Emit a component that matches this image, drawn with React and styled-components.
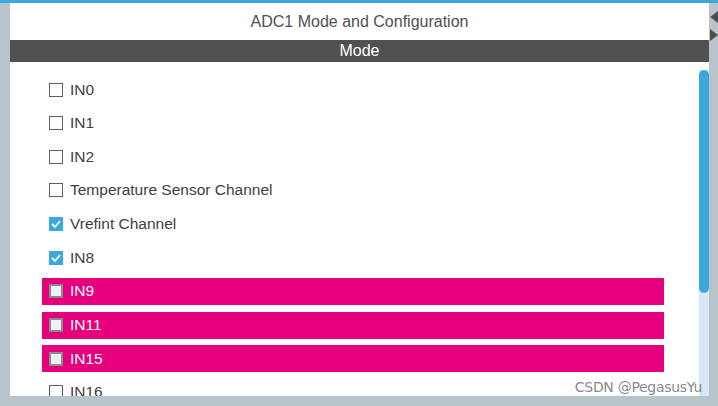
import React from "react";
import styled, { createGlobalStyle } from "styled-components";

const GlobalStyle = createGlobalStyle`
  html, body {
    margin: 0;
    padding: 0;
    background: #b9c4ca;
    font-family: Arial, "Liberation Sans", sans-serif;
  }
`;

const Frame = styled.div`
  width: 718px;
  height: 406px;
  display: flex;
  flex-direction: column;
  background: #b9c4ca;
  overflow: hidden;
  position: relative;
`;

const TopBar = styled.div`
  height: 3px;
  background: #3aa9dd;
  flex: none;
`;

const Body = styled.div`
  flex: 1;
  display: flex;
  min-height: 0;
`;

const LeftStrip = styled.div`
  width: 10px;
  flex: none;
`;

const Main = styled.div`
  width: 699px;
  flex: none;
  display: flex;
  flex-direction: column;
  background: #fff;
`;

const RightStrip = styled.div`
  flex: 1;
  display: flex;
  flex-direction: column;
  align-items: flex-end;
  padding-top: 8px;
  gap: 6px;
`;

const Header = styled.div`
  height: 37px;
  display: flex;
  align-items: center;
  justify-content: center;
  font-size: 16px;
  color: #505050;
`;

const SectionBar = styled.div`
  height: 22px;
  background: #505150;
  color: #fff;
  font-size: 16px;
  display: flex;
  align-items: center;
  justify-content: center;
`;

const ListArea = styled.div`
  flex: 1;
  display: flex;
  min-height: 0;
`;

const List = styled.div`
  flex: 1;
  padding: 14px 35px 0 32px;
  display: flex;
  flex-direction: column;
  gap: 6.67px;
  overflow: hidden;
`;

const Row = styled.div`
  height: 27px;
  flex: none;
  display: flex;
  align-items: center;
  padding-left: 7px;
  gap: 7px;
  background: ${(p) => (p.$alert ? "#e6007e" : "transparent")};
  color: ${(p) => (p.$alert ? "#fff" : "#404040")};
  font-size: 15.5px;
`;

const Box = styled.span`
  width: 14px;
  height: 14px;
  box-sizing: border-box;
  flex: none;
  display: flex;
  align-items: center;
  justify-content: center;
  border: ${(p) =>
    p.$checked ? "none" : p.$alert ? "2px solid #8c8c8c" : "1.5px solid #5f5f5f"};
  background: ${(p) => (p.$checked ? "#3aa9dd" : p.$alert ? "#eef0f3" : "#fff")};
`;

const Track = styled.div`
  width: 10px;
  flex: none;
  margin-top: 8px;
  background: #d6e8f6;
`;

const Thumb = styled.div`
  height: 223px;
  background: #3aa9dd;
  border-radius: 5px;
`;

const Footer = styled.div`
  height: 10px;
  flex: none;
`;

const Watermark = styled.div`
  position: absolute;
  right: 16px;
  bottom: 11px;
  font-size: 14px;
  color: #8a8a8a;
  font-family: "DejaVu Sans", "Liberation Sans", sans-serif;
  letter-spacing: -0.3px;
`;

const Arrow = ({ dir }) => (
  <svg width="8" height="12" viewBox="0 0 8 12">
    {dir === "left" ? (
      <polygon points="8,0 8,12 0,6" fill="#4d4d4d" />
    ) : (
      <polygon points="0,0 8,6 0,12" fill="#4d4d4d" />
    )}
  </svg>
);

const Check = () => (
  <svg width="12" height="12" viewBox="0 0 12 12">
    <polyline
      points="2,6 5,9 10,3"
      fill="none"
      stroke="#fff"
      strokeWidth="1.8"
    />
  </svg>
);

const channels = [
  { label: "IN0" },
  { label: "IN1" },
  { label: "IN2" },
  { label: "Temperature Sensor Channel" },
  { label: "Vrefint Channel", checked: true },
  { label: "IN8", checked: true },
  { label: "IN9", alert: true },
  { label: "IN11", alert: true },
  { label: "IN15", alert: true },
  { label: "IN16" },
];

export default function App() {
  return (
    <Frame>
      <GlobalStyle />
      <TopBar />
      <Body>
        <LeftStrip />
        <Main>
          <Header>ADC1 Mode and Configuration</Header>
          <SectionBar>Mode</SectionBar>
          <ListArea>
            <List>
              {channels.map((c) => (
                <Row key={c.label} $alert={c.alert}>
                  <Box $checked={c.checked} $alert={c.alert}>
                    {c.checked && <Check />}
                  </Box>
                  {c.label}
                </Row>
              ))}
            </List>
            <Track>
              <Thumb />
            </Track>
          </ListArea>
        </Main>
        <RightStrip>
          <Arrow dir="left" />
          <Arrow dir="right" />
        </RightStrip>
      </Body>
      <Footer />
      <Watermark>CSDN @PegasusYu</Watermark>
    </Frame>
  );
}
